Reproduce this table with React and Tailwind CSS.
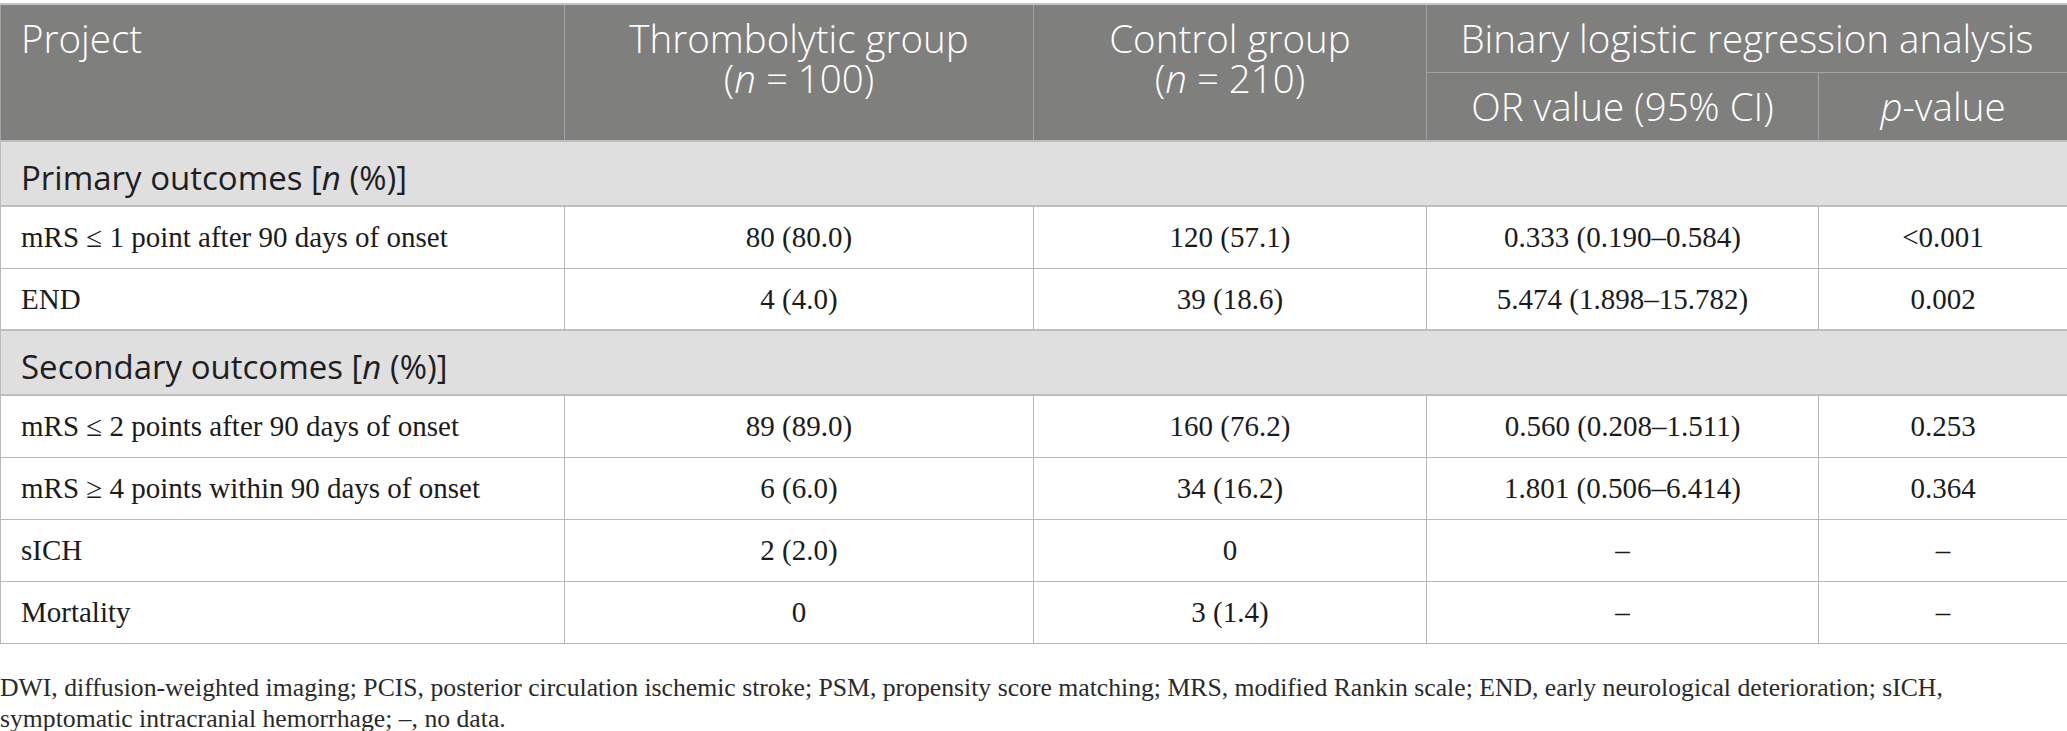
import React from "react";

const sans = "font-['Open_Sans',sans-serif]";
const serif = "font-['Liberation_Serif',serif]";

const rowsA = [
  ["mRS ≤ 1 point after 90 days of onset", "80 (80.0)", "120 (57.1)", "0.333 (0.190–0.584)", "<0.001"],
  ["END", "4 (4.0)", "39 (18.6)", "5.474 (1.898–15.782)", "0.002"],
];

const rowsB = [
  ["mRS ≤ 2 points after 90 days of onset", "89 (89.0)", "160 (76.2)", "0.560 (0.208–1.511)", "0.253"],
  ["mRS ≥ 4 points within 90 days of onset", "6 (6.0)", "34 (16.2)", "1.801 (0.506–6.414)", "0.364"],
  ["sICH", "2 (2.0)", "0", "–", "–"],
  ["Mortality", "0", "3 (1.4)", "–", "–"],
];

const DataRow = ({ row }) => (
  <tr className="h-[62px]">
    {row.map((cell, i) => (
      <td
        key={i}
        className={`border border-[#b8b8b8] align-middle text-[29px] leading-[34px] text-[#1b1b1b] ${serif} ${
          i === 0 ? "text-left pl-[20px]" : "text-center"
        }`}
      >
        {cell}
      </td>
    ))}
  </tr>
);

const SectionRow = ({ children }) => (
  <tr className="h-[65px] bg-[#e0dfe0]">
    <td
      colSpan={5}
      className={`border-y-2 border-x border-[#bdbdbd] pl-[20px] pt-[8px] align-middle text-left text-[33px] leading-[40px] text-[#1e1e1e] ${sans}`}
    >
      {children}
    </td>
  </tr>
);

export default function App() {
  const th = `border border-[#a3a3a3] bg-[#7f807e] text-white font-light text-[38.5px] leading-[40px] align-top pt-[13px] pb-[14px] ${sans}`;
  return (
    <div className="w-[2067px] bg-white pt-[3px]">
      <table className="w-full table-fixed border-collapse border-t-2 border-[#c4c4c4]">
        <colgroup>
          <col className="w-[564px]" />
          <col className="w-[469px]" />
          <col className="w-[393px]" />
          <col className="w-[392px]" />
          <col className="w-[249px]" />
        </colgroup>
        <thead>
          <tr>
            <th rowSpan={2} className={`${th} text-left pl-[20px]`}>
              Project
            </th>
            <th rowSpan={2} className={`${th} text-center`}>
              Thrombolytic group
              <br />(<i>n</i> = 100)
            </th>
            <th rowSpan={2} className={`${th} text-center`}>
              Control group
              <br />(<i>n</i> = 210)
            </th>
            <th colSpan={2} className={`${th} text-center`}>
              Binary logistic regression analysis
            </th>
          </tr>
          <tr>
            <th className={`${th} text-center`}>OR value (95% CI)</th>
            <th className={`${th} text-center`}>
              <i>p</i>-value
            </th>
          </tr>
        </thead>
        <tbody>
          <SectionRow>
            Primary outcomes [<i>n</i> (%)]
          </SectionRow>
          {rowsA.map((r, i) => (
            <DataRow key={i} row={r} />
          ))}
          <SectionRow>
            Secondary outcomes [<i>n</i> (%)]
          </SectionRow>
          {rowsB.map((r, i) => (
            <DataRow key={i} row={r} />
          ))}
        </tbody>
      </table>
      <p className={`mt-[28px] whitespace-nowrap text-[25.7px] leading-[31px] text-[#2a2a2a] ${serif}`}>
        DWI, diffusion-weighted imaging; PCIS, posterior circulation ischemic stroke; PSM, propensity score matching; MRS, modified Rankin scale; END, early neurological deterioration; sICH,
        <br />
        symptomatic intracranial hemorrhage; –, no data.
      </p>
    </div>
  );
}
